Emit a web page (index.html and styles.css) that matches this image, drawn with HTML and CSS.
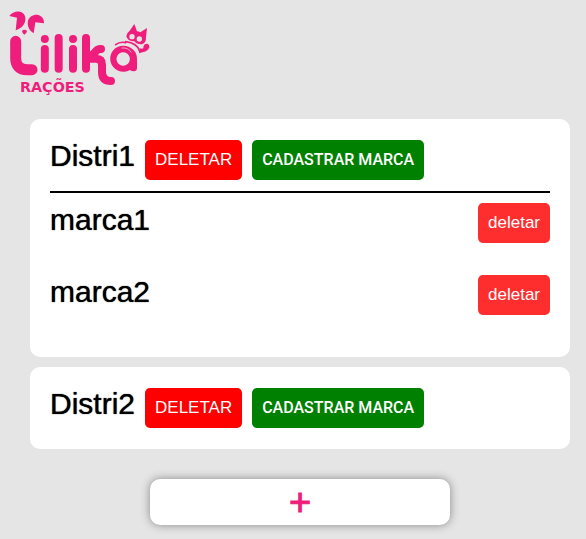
FILE: index.html
```html
<!DOCTYPE html>
<html lang="pt-BR">
<head>
<meta charset="utf-8">
<meta name="viewport" content="width=device-width, initial-scale=1">
<title>Lilika Rações</title>
<link rel="stylesheet" href="styles.css">
</head>
<body>
<header class="top">
  <svg class="logo" viewBox="0 0 480 330" role="img" aria-label="Lilika Rações">
    <!-- bow -->
    <path class="fill" d="M28 48C35 38 48 33 59 35C71 37 78 47 76 60C75 73 64 86 47 91L51 53Z"/>
    <path class="fill" d="M101 100C86 90 81 76 84 62C88 49 102 42 115 45C126 48 133 58 132 70L106 67Z"/>
    <path class="fill" d="M66 92Q73 86 81 92Q81 99 73 104Q66 99 66 92Z"/>
    <!-- letters -->
    <path class="line big" d="M47 124V174Q47 209 82 209H96"/>
    <path class="line" d="M134.500 147V206M176 114V206M219 147V206M258 114V206"/>
    <circle class="fill" cx="134.500" cy="117" r="12"/>
    <circle class="fill" cx="219" cy="117" r="12"/>
    <path class="line" d="M262 172Q278 167 285 157Q291 147 303 147M264 176H288Q306 176 306 194V216Q306 243 333 243"/>
    <path class="fill" fill-rule="evenodd" d="M370 137A40 39 0 1 0 390 210Q394 214 401 214Q411 214 411 204V176A41 39 0 0 0 370 137ZM370 157A20 20 0 1 1 369 157Z"/>
    <path class="shine" d="M366 144Q385 142 393 156"/>
    <!-- cat -->
    <path class="curve" d="M347 134Q360 124 377 128"/>
    <path class="curve" d="M377 125Q412 129 419 154"/>
    <path class="fill" d="M403 72L411 94Q417 94 421 97L441 84L438 112Q439 128 426 133Q410 134 403 124Q382 124 379 109Q381 97 389 92Z"/>
    <circle class="eye" cx="396" cy="110" r="8"/>
    <circle class="eye" cx="418" cy="117" r="8"/>
    <path class="fill" d="M417 160L419 144Q427 149 430 144Q430 132 439 131Q449 132 448 142Q443 155 430 156Z"/>
    <text class="tag" x="60" y="277">RAÇÕES</text>
  </svg>
</header>
<main class="list">
  <section class="card">
    <div class="head">
      <h2 class="name">Distri1</h2>
      <button class="btn remove" type="button">DELETAR</button>
      <button class="btn add" type="button">CADASTRAR MARCA</button>
    </div>
    <ul class="brands">
      <li class="brand"><h3 class="name">marca1</h3><button class="btn soft" type="button">deletar</button></li>
      <li class="brand"><h3 class="name">marca2</h3><button class="btn soft" type="button">deletar</button></li>
    </ul>
  </section>
  <section class="card">
    <div class="head">
      <h2 class="name">Distri2</h2>
      <button class="btn remove" type="button">DELETAR</button>
      <button class="btn add" type="button">CADASTRAR MARCA</button>
    </div>
  </section>
  <button class="new" type="button" aria-label="Adicionar distribuidora">+</button>
</main>
</body>
</html>
```
FILE: styles.css
```css
* { box-sizing: border-box; }
body {
  margin: 0;
  background: #e5e5e5;
  color: #000;
  font-family: "Liberation Sans", Arial, sans-serif;
}
.top { padding-bottom: 9px; }
.logo { display: block; width: 160px; height: 110px; }
.fill { fill: #ef1e7c; }
.line { fill: none; stroke: #ef1e7c; stroke-width: 24; stroke-linecap: round; stroke-linejoin: round; }
.big { stroke-width: 33; }
.curve { fill: none; stroke: #ef1e7c; stroke-width: 5; stroke-linecap: round; }
.shine { fill: none; stroke: #e5e5e5; stroke-width: 2; stroke-linecap: round; }
.eye { fill: #e5e5e5; }
.tag { fill: #ef1e7c; font: 700 43px "DejaVu Sans", sans-serif; }
.list {
  display: flex;
  flex-direction: column;
  gap: 10px;
  padding: 0 16px 14px 30px;
}
.card { padding: 20px; background: #fff; border-radius: 10px; }
.head { display: flex; align-items: center; gap: 10px; height: 42px; }
.head .name { align-self: flex-start; }
.name {
  margin: 0;
  font-size: 30px;
  font-weight: 400;
  line-height: 34px;
  text-shadow: 0 0 1px #000;
}
.btn {
  padding: 10px;
  border: 0;
  border-radius: 5px;
  color: #fff;
  font-family: inherit;
  font-size: 17px;
  line-height: 20px;
  cursor: pointer;
}
.remove { background: #f00; }
.add { background: #008000; font-family: Roboto, sans-serif; font-size: 16px; font-weight: 500; }
.soft { background: #ff2e2e; }
.brands {
  margin: 10px 0 0;
  padding: 10px 0 0;
  border-top: 2px solid #000;
  list-style: none;
}
.brand {
  display: flex;
  align-items: flex-start;
  justify-content: space-between;
  padding-bottom: 32px;
}
.brand:last-child { padding-bottom: 22px; }
.new {
  align-self: center;
  width: 300px;
  max-width: 100%;
  height: 46px;
  margin-top: 20px;
  padding: 0;
  border: 0;
  border-radius: 10px;
  background: #fff;
  box-shadow: 0 0 10px #888;
  color: #ef1e7c;
  font: 400 38px/46px "Liberation Sans", Arial, sans-serif;
  -webkit-text-stroke: 1px #ef1e7c;
  cursor: pointer;
}
```
